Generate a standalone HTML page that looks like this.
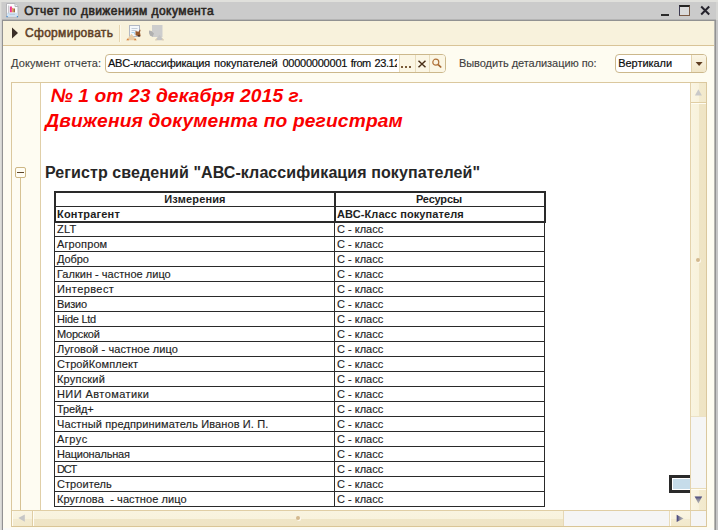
<!DOCTYPE html>
<html lang="ru">
<head>
<meta charset="utf-8">
<title>Отчет по движениям документа</title>
<style>
*{box-sizing:border-box;margin:0;padding:0}
html,body{width:718px;height:530px;overflow:hidden}
body{position:relative;background:#cbcbcb;font-family:"Liberation Sans",sans-serif;color:#222}
.a{position:absolute}
.t{position:absolute;white-space:pre}
.ln{position:absolute;background:#2a2a2a}
.tan{position:absolute;background:#dcc9a0}
.ui{font-size:11px;line-height:13px}
.lbl{color:#3e3e3e;-webkit-text-stroke:.12px #3e3e3e}
.fld{color:#0c0c0c;-webkit-text-stroke:.18px #0c0c0c}
.field{position:absolute;background:#fff;border:1px solid #ccb88c;border-radius:4px}
.red{color:#fa0000;font-weight:bold;font-style:italic;font-size:19.2px;line-height:22px}
.h2{font-weight:bold;font-size:16px;line-height:18px;color:#262626;letter-spacing:.09px}
.c{font-size:11px;line-height:12px;color:#1e1e1e;letter-spacing:0;-webkit-text-stroke:.15px #1e1e1e}
.b{font-weight:bold}
.c.b{-webkit-text-stroke:0}
.sbv{position:absolute;background:linear-gradient(90deg,#f9f4e0 0,#f8f2dc 50%,#efe5c6 50%,#efe4c4 100%)}
.btv{position:absolute;background:linear-gradient(90deg,#faf5e3 0,#f8f2dd 50%,#f3ebd0 50%,#f2e9cc 100%)}
.bth{position:absolute;background:linear-gradient(180deg,#faf5e3 0,#f8f2dd 55%,#f3ebd0 55%,#f2e9cc 100%)}
.sbh{position:absolute;background:linear-gradient(180deg,#f9f4e0 0,#f8f2dc 55%,#efe5c6 55%,#efe4c4 100%)}
</style>
</head>
<body>
<div class="a" style="left:0;top:0;width:718px;height:2px;background:#e0e0dc"></div>
<div class="a" style="left:0;top:2px;width:1px;height:528px;background:#dededa"></div>
<div class="a" style="left:1px;top:2px;width:1px;height:528px;background:#d2d2d0"></div>
<div class="a" style="left:716px;top:2px;width:2px;height:18px;background:#d6d6d4"></div>
<div class="a" style="left:2px;top:20px;width:714px;height:510px;background:#929292"></div>
<div class="a" style="left:2px;top:19px;width:714px;height:1px;background:#b4b4b4"></div>
<div class="a" style="left:716px;top:20px;width:2px;height:510px;background:#c6c6c6"></div>
<div class="a" style="left:714px;top:21px;width:1px;height:509px;background:#b9b8b2"></div>
<div class="a" id="client" style="left:3px;top:21px;width:711px;height:509px;background:#fefcf1"></div>
<div class="a" style="left:3px;top:528px;width:711px;height:2px;background:#fbfbf8"></div>
<svg class="a" style="left:6px;top:3px" width="13" height="15" viewBox="0 0 13 15">
<path d="M0.500 0.500h8.500l3 3v10.500h-11.500z" fill="#fbfbfd" stroke="#b4b4b8"/>
<path d="M9 0.500v3h3" fill="#e8eef6" stroke="#b4b4b8"/>
<rect x="1" y="9.700" width="10.500" height="3.800" fill="#cfe3f5"/>
<rect x="2.200" y="2.500" width="1" height="8" fill="#bcbcc0"/>
<rect x="3.900" y="3.500" width="2" height="5.800" fill="#f0388c"/>
<rect x="6" y="4.900" width="1.200" height="4.400" fill="#e8a058"/>
<rect x="7.300" y="5.500" width="1.700" height="3.800" fill="#9a6a3c"/>
<rect x="3.500" y="10.800" width="5.500" height="1" fill="#b9c7d6"/>
<rect x="0.500" y="13" width="1.200" height="1.200" fill="#3c8cd8"/><rect x="10.800" y="13" width="1.200" height="1.200" fill="#3c8cd8"/>
</svg>
<div class="t" id="title" style="left:24.3px;top:4px;font-size:12px;line-height:14px;letter-spacing:.44px;color:#2a2622;-webkit-text-stroke:.55px #2a2622">Отчет по движениям документа</div>
<div class="a" style="left:661px;top:14px;width:8px;height:2px;background:#2b2b2b"></div>
<div class="a" style="left:679px;top:5px;width:11px;height:11px;border:1px solid #7a5a44;border-left-color:#3c3a52;border-top:2px solid #242424;background:#dadada"></div>
<svg class="a" style="left:700px;top:5px" width="11" height="11" viewBox="0 0 11 11"><path d="M1.200 1.500L9.200 9.500M9.200 1.500L1.200 9.500" stroke="#25232d" stroke-width="2" fill="none"/></svg>
<div class="a" style="left:3px;top:21px;width:711px;height:24px;background:#f8f2dc"></div>
<div class="tan" style="left:3px;top:45px;width:711px;height:1px;background:#d9c497"></div>
<svg class="a" style="left:11px;top:27px" width="8" height="12" viewBox="0 0 8 12"><path d="M1 0.500L7 6L1 11.500z" fill="#3a2e26"/></svg>
<div class="t" id="run" style="left:25px;top:26px;font-size:12px;line-height:14px;letter-spacing:.3px;color:#5e4026;-webkit-text-stroke:.5px #5e4026">Сформировать</div>
<div class="a" style="left:119px;top:25px;width:1px;height:17px;background:#e6d5b0"></div><div class="a" style="left:120px;top:25px;width:1px;height:17px;background:#fdf9ec"></div>
<svg class="a" style="left:125px;top:23px" width="20" height="20" viewBox="125 23 20 20">
<rect x="129.500" y="25.500" width="10" height="11" fill="#f5f8fb" stroke="#b2b8c4"/>
<path d="M131.500 28.500h6M131.500 30.500h5" stroke="#c3ccd8" stroke-width="1"/>
<path d="M131.500 32.500h3v2" stroke="#a9d0ea" stroke-width="1" fill="none"/>
<path d="M126.300 40.200L131.500 33.800L136.700 40.200z" fill="#e9cda6"/>
<path d="M126.300 40.200l1.600-2 1.200 2zM136.700 40.200l-1.600-2-1.200 2z" fill="#d8803e"/>
<path d="M135.500 31l3 .8 1.400-2.300 .7 .4-.6 2.400 .7 4-1.800 .3-3.400-1.400z" fill="#96592e"/>
<path d="M138 35.300l1.500-.5.4 1.500-1.200.4z" fill="#3a2a20"/>
</svg>
<svg class="a" style="left:147px;top:23px" width="20" height="20" viewBox="147 23 20 20">
<rect x="152" y="25" width="10.500" height="12" fill="#cdcdcd"/>
<path d="M149 30.600l2.500 .4 2.500 2.400-1.400 3.400-2.400-1-1.200-2.600z" fill="#b0b0b0"/>
<path d="M155 40.200L159.500 34.800L164 40.200z" fill="#c4c4c4"/>
<path d="M155 40.200l1.300-1.600 1 1.600zM164 40.200l-1.300-1.600-1 1.600z" fill="#e2cfae"/>
</svg>
<div class="t ui lbl" style="left:11.0px;top:57.4px;letter-spacing:.12px">Документ отчета:</div>
<div class="field" style="left:105px;top:54px;width:341px;height:19px"></div>
<div class="a" style="left:399px;top:55px;width:46px;height:17px;background:#fbf6e4;border-radius:0 3px 3px 0"></div>
<div class="a" style="left:399px;top:55px;width:1px;height:17px;background:#e8dcbc"></div>
<div class="a" style="left:415px;top:55px;width:1px;height:17px;background:#e8dcbc"></div>
<div class="a" style="left:429px;top:55px;width:1px;height:17px;background:#e8dcbc"></div>
<div class="a ui fld" style="left:105px;top:57.4px;width:292px;height:13px;overflow:hidden">
<span class="t" style="left:3.0px;top:0;letter-spacing:-0.217px">ABC-классификация</span>
<span class="t" style="left:109.0px;top:0;letter-spacing:0.0px">покупателей</span>
<span class="t" style="left:177.4px;top:0;letter-spacing:-0.23px">00000000001</span>
<span class="t" style="left:245.7px;top:0;letter-spacing:-0.47px">from</span>
<span class="t" style="left:269.6px;top:0;letter-spacing:-0.43px">23.12</span>
</div>
<div class="a" style="left:401px;top:66px;width:2px;height:2px;background:#7a5c3a"></div>
<div class="a" style="left:405px;top:66px;width:2px;height:2px;background:#7a5c3a"></div>
<div class="a" style="left:409px;top:66px;width:2px;height:2px;background:#7a5c3a"></div>
<svg class="a" style="left:417px;top:59px" width="10" height="10" viewBox="0 0 10 10"><path d="M1.500 1.800L8.500 8.200M8.500 1.800L1.500 8.200" stroke="#4a3018" stroke-width="1.500"/></svg>
<svg class="a" style="left:431px;top:57px" width="13" height="13" viewBox="0 0 13 13"><circle cx="4.800" cy="5.200" r="3" fill="#fbf3df" stroke="#b0733a" stroke-width="1.200"/><path d="M7.200 7.600L10.200 10.500" stroke="#a4652e" stroke-width="1.700"/></svg>
<div class="t ui lbl" style="left:459.0px;top:57.4px;letter-spacing:-.06px">Выводить детализацию по:</div>
<div class="field" style="left:615px;top:54px;width:92px;height:19px"></div>
<div class="t ui fld" style="left:618.2px;top:57.4px;letter-spacing:-.04px">Вертикали</div>
<div class="a" style="left:691px;top:55px;width:15px;height:17px;background:linear-gradient(180deg,#fbf6e6,#f1e6c8);border-left:1px solid #e2d4b0;border-radius:0 3px 3px 0"></div>
<svg class="a" style="left:695px;top:62px" width="8" height="5" viewBox="0 0 8 5"><path d="M0.600 0.100h7L4.100 3.900z" fill="#5e3c20"/></svg>
<div class="a" style="left:11px;top:82px;width:696px;height:445px;border:1px solid #dbc89e;background:#fff"></div>
<div class="a" style="left:12px;top:83px;width:28px;height:427px;background:#fefcf2"></div>
<div class="tan" style="left:40px;top:83px;width:1px;height:427px;background:#e0cfa8"></div>
<div class="tan" style="left:20px;top:178px;width:1px;height:332px;background:#d6c294"></div>
<div class="a" style="left:15px;top:167px;width:11px;height:11px;border:1px solid #cdb785;border-radius:2px;background:#fffdf4"></div>
<div class="a" style="left:17px;top:172px;width:7px;height:1px;background:#5e4628"></div>
<div class="t red" style="left:50.8px;top:85.0px;letter-spacing:.1px">№ 1 от 23 декабря 2015 г.</div>
<div class="t red" style="left:45.2px;top:110.1px;letter-spacing:.15px">Движения документа по регистрам</div>
<div class="t h2" style="left:45.0px;top:164.0px;">Регистр сведений "АВС-классификация покупателей"</div>
<div class="ln" style="left:54px;top:191px;width:492px;height:2px"></div>
<div class="ln" style="left:54px;top:206px;width:492px;height:1px"></div>
<div class="ln" style="left:54px;top:221px;width:492px;height:2px"></div>
<div class="ln" style="left:54px;top:191px;width:2px;height:31px"></div>
<div class="ln" style="left:54px;top:222px;width:1px;height:285px"></div>
<div class="ln" style="left:334px;top:191px;width:2px;height:31px"></div>
<div class="ln" style="left:334px;top:222px;width:1px;height:285px"></div>
<div class="ln" style="left:544px;top:191px;width:2px;height:31px"></div>
<div class="ln" style="left:544px;top:222px;width:1px;height:285px"></div>
<div class="t c b" style="left:56.0px;top:193.0px;width:278px;text-align:center;letter-spacing:.15px">Измерения</div>
<div class="t c b" style="left:336.0px;top:193.0px;width:206px;text-align:center;letter-spacing:-.19px">Ресурсы</div>
<div class="t c b" style="left:57.0px;top:208.0px;letter-spacing:.2px">Контрагент</div>
<div class="t c b" style="left:337.0px;top:208.0px;letter-spacing:.1px">АВС-Класс покупателя</div>
<div class="ln" style="left:54px;top:236px;width:491px;height:1px"></div>
<div class="t c" style="left:57px;top:223px;letter-spacing:0.18px">ZLT</div><div class="t c" style="left:337px;top:223px">С - класс</div>
<div class="ln" style="left:54px;top:251px;width:491px;height:1px"></div>
<div class="t c" style="left:57px;top:238px;letter-spacing:0.12px">Агропром</div><div class="t c" style="left:337px;top:238px">С - класс</div>
<div class="ln" style="left:54px;top:266px;width:491px;height:1px"></div>
<div class="t c" style="left:57px;top:253px;letter-spacing:-0.11px">Добро</div><div class="t c" style="left:337px;top:253px">С - класс</div>
<div class="ln" style="left:54px;top:281px;width:491px;height:1px"></div>
<div class="t c" style="left:57px;top:268px;letter-spacing:0.02px">Галкин - частное лицо</div><div class="t c" style="left:337px;top:268px">С - класс</div>
<div class="ln" style="left:54px;top:296px;width:491px;height:1px"></div>
<div class="t c" style="left:57px;top:283px;letter-spacing:0.42px">Интервест</div><div class="t c" style="left:337px;top:283px">С - класс</div>
<div class="ln" style="left:54px;top:311px;width:491px;height:1px"></div>
<div class="t c" style="left:57px;top:298px;letter-spacing:-0.15px">Визио</div><div class="t c" style="left:337px;top:298px">С - класс</div>
<div class="ln" style="left:54px;top:326px;width:491px;height:1px"></div>
<div class="t c" style="left:57px;top:313px;letter-spacing:-0.25px">Hide Ltd</div><div class="t c" style="left:337px;top:313px">С - класс</div>
<div class="ln" style="left:54px;top:341px;width:491px;height:1px"></div>
<div class="t c" style="left:57px;top:328px;letter-spacing:-0.22px">Морской</div><div class="t c" style="left:337px;top:328px">С - класс</div>
<div class="ln" style="left:54px;top:356px;width:491px;height:1px"></div>
<div class="t c" style="left:57px;top:343px;letter-spacing:0.09px">Луговой - частное лицо</div><div class="t c" style="left:337px;top:343px">С - класс</div>
<div class="ln" style="left:54px;top:371px;width:491px;height:1px"></div>
<div class="t c" style="left:57px;top:358px;letter-spacing:0.09px">СтройКомплект</div><div class="t c" style="left:337px;top:358px">С - класс</div>
<div class="ln" style="left:54px;top:386px;width:491px;height:1px"></div>
<div class="t c" style="left:57px;top:373px;letter-spacing:0.2px">Крупский</div><div class="t c" style="left:337px;top:373px">С - класс</div>
<div class="ln" style="left:54px;top:401px;width:491px;height:1px"></div>
<div class="t c" style="left:57px;top:388px;letter-spacing:0.43px">НИИ Автоматики</div><div class="t c" style="left:337px;top:388px">С - класс</div>
<div class="ln" style="left:54px;top:416px;width:491px;height:1px"></div>
<div class="t c" style="left:57px;top:403px;letter-spacing:-0.11px">Трейд+</div><div class="t c" style="left:337px;top:403px">С - класс</div>
<div class="ln" style="left:54px;top:431px;width:491px;height:1px"></div>
<div class="t c" style="left:57px;top:418px;letter-spacing:0.12px">Частный предприниматель Иванов И. П.</div><div class="t c" style="left:337px;top:418px">С - класс</div>
<div class="ln" style="left:54px;top:446px;width:491px;height:1px"></div>
<div class="t c" style="left:57px;top:433px;letter-spacing:0.49px">Агрус</div><div class="t c" style="left:337px;top:433px">С - класс</div>
<div class="ln" style="left:54px;top:461px;width:491px;height:1px"></div>
<div class="t c" style="left:57px;top:448px;letter-spacing:-0.2px">Национальная</div><div class="t c" style="left:337px;top:448px">С - класс</div>
<div class="ln" style="left:54px;top:476px;width:491px;height:1px"></div>
<div class="t c" style="left:57px;top:463px;letter-spacing:-1.25px">DCT</div><div class="t c" style="left:337px;top:463px">С - класс</div>
<div class="ln" style="left:54px;top:491px;width:491px;height:1px"></div>
<div class="t c" style="left:57px;top:478px;letter-spacing:0.06px">Строитель</div><div class="t c" style="left:337px;top:478px">С - класс</div>
<div class="ln" style="left:54px;top:506px;width:491px;height:1px"></div>
<div class="t c" style="left:57px;top:493px;letter-spacing:0.09px">Круглова  - частное лицо</div><div class="t c" style="left:337px;top:493px">С - класс</div>
<div class="a" style="left:669px;top:475px;width:30px;height:18px;border:3px solid #2a2a2a;background:#c6dcea;box-shadow:inset 0 0 0 1px #fff"></div>
<div class="a" style="left:690px;top:83px;width:17px;height:427px;background:#f5f5f5;border-left:1px solid #e4d3ad;border-right:1px solid #dbc89e"></div>
<div class="btv" style="left:691px;top:83px;width:15px;height:19px"></div>
<div class="tan" style="left:691px;top:102px;width:15px;height:1px;background:#e0cea4"></div>
<div class="sbv" style="left:691px;top:103px;width:15px;height:313px;border-top:1px solid #fffdf4"></div>
<div class="tan" style="left:691px;top:416px;width:15px;height:1px;background:#ece2c6"></div>
<div class="tan" style="left:691px;top:488px;width:15px;height:1px;background:#e9dcba"></div>
<div class="btv" style="left:691px;top:489px;width:15px;height:21px;border-top:1px solid #fffdf4"></div>
<div class="a" style="left:696px;top:258px;width:4px;height:4px;border-radius:2px;background:#d3b98e;box-shadow:1px 1px 0 #fffaf0"></div>
<svg class="a" style="left:694px;top:88px" width="9" height="9" viewBox="0 0 9 9"><path d="M4.400 1.200L7.900 7.600H0.900z" fill="#c9c9c9"/></svg>
<svg class="a" style="left:694px;top:496px" width="9" height="8" viewBox="0 0 9 8"><defs><linearGradient id="gd" x1="0" y1="0" x2="0" y2="1"><stop offset="0" stop-color="#40407a"/><stop offset=".45" stop-color="#8c8c9c"/><stop offset="1" stop-color="#b4b4b4"/></linearGradient></defs><path d="M0.600 0.500h7.600L4.400 7.400z" fill="url(#gd)"/></svg>
<div class="a" style="left:12px;top:510px;width:694px;height:17px;background:#f5f5f5;border-top:1px solid #e0cea4;border-bottom:1px solid #d9c596"></div>
<div class="bth" style="left:12px;top:511px;width:20px;height:15px;border-left:1px solid #fffdf4"></div>
<div class="tan" style="left:32px;top:511px;width:1px;height:15px;background:#e0cea4"></div>
<div class="sbh" style="left:33px;top:511px;width:530px;height:15px;border-left:1px solid #fffdf4"></div>
<div class="tan" style="left:563px;top:511px;width:1px;height:15px;background:#e6d8b6"></div>
<div class="tan" style="left:669px;top:511px;width:1px;height:15px;background:#e9dcba"></div>
<div class="bth" style="left:670px;top:511px;width:20px;height:15px;border-left:1px solid #fffdf4"></div>
<div class="tan" style="left:690px;top:511px;width:1px;height:15px;background:#e4d3ad"></div>
<div class="a" style="left:296px;top:516px;width:4px;height:4px;border-radius:2px;background:#d3b98e;box-shadow:1px 1px 0 #fffaf0"></div>
<svg class="a" style="left:17px;top:513px" width="9" height="10" viewBox="0 0 9 10"><path d="M7.800 1.500v7.200L1.300 5.100z" fill="#c6c6c6"/></svg>
<svg class="a" style="left:676px;top:514px" width="9" height="9" viewBox="0 0 9 9"><defs><linearGradient id="gr" x1="0" y1="0" x2="1" y2="0"><stop offset="0" stop-color="#38387a"/><stop offset=".45" stop-color="#8c8c9c"/><stop offset="1" stop-color="#b8b8b8"/></linearGradient></defs><path d="M0.700 0.700v7.400L7.600 4.400z" fill="url(#gr)"/></svg>
</body>
</html>
